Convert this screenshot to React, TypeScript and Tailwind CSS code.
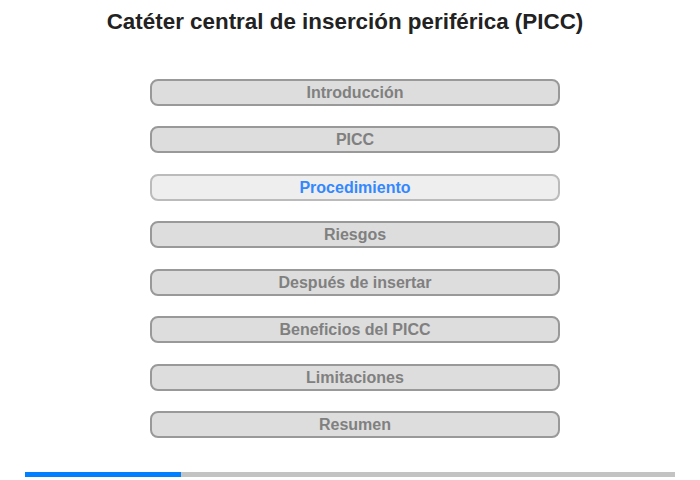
import React from 'react';

const sections = [
    'Introducción',
    'PICC',
    'Procedimiento',
    'Riesgos',
    'Después de insertar',
    'Beneficios del PICC',
    'Limitaciones',
    'Resumen',
];

const activeIndex = 2;

export default function App() {
    return (
        <div className="w-[700px] h-[480px] bg-white flex flex-col font-['Liberation_Sans',Arial,sans-serif]">
            <h1 className="pt-[9px] pr-[10px] text-center text-[22.4px] leading-[26px] font-bold text-[#222]">
                Catéter central de inserción periférica (PICC)
            </h1>

            <div className="mt-[44px] pl-[10px] flex flex-col items-center gap-[20.43px]">
                {sections.map((label, i) => {
                    const active = i === activeIndex;
                    return (
                        <button
                            key={label}
                            className={
                                active
                                    ? 'w-[410px] h-[27px] pt-px rounded-[8px] border-2 border-[#bbb] bg-[#eee] text-[#3388ff] text-[16px] font-bold leading-none'
                                    : 'w-[410px] h-[27px] pt-px rounded-[8px] border-2 border-[#999] bg-[#ddd] text-[#808080] text-[16px] font-bold leading-none'
                            }
                        >
                            {label}
                        </button>
                    );
                })}
            </div>

            <div className="mt-auto mb-[3px] mx-[25px] h-[5px] bg-[#c3c3c3] flex">
                <div className="w-[156px] h-full bg-[#0080ff]" />
            </div>
        </div>
    );
}
